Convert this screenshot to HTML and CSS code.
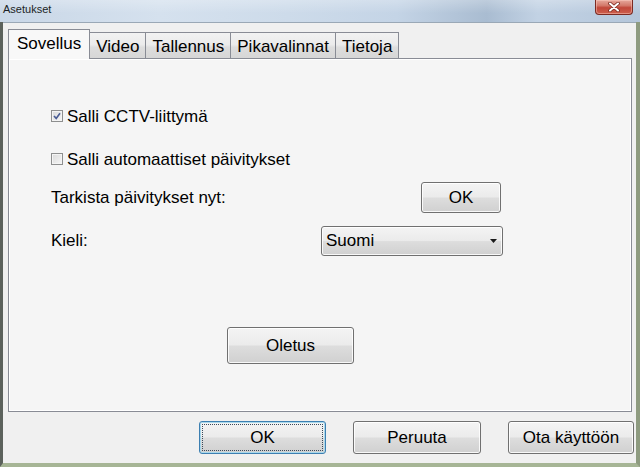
FILE: index.html
```html
<!DOCTYPE html>
<html lang="fi">
<head>
<meta charset="utf-8">
<title>Asetukset</title>
<link rel="stylesheet" href="styles.css">
</head>
<body>
<div class="window">
  <div class="titlebar">
    <span class="title">Asetukset</span>
    <div class="close">
      <svg width="12" height="10" viewBox="0 0 12 10">
        <path d="M2 1.5 L10 8.5 M10 1.5 L2 8.5" stroke="#7a2a20" stroke-width="3.6" stroke-linecap="round" fill="none"/>
        <path d="M2 1.5 L10 8.5 M10 1.5 L2 8.5" stroke="#ffffff" stroke-width="2" stroke-linecap="round" fill="none"/>
      </svg>
    </div>
  </div>
  <div class="frame">
    <div class="client">
      <div class="tabs">
        <div class="tab active">Sovellus</div>
        <div class="tab">Video</div>
        <div class="tab">Tallennus</div>
        <div class="tab">Pikavalinnat</div>
        <div class="tab">Tietoja</div>
      </div>
      <div class="panel">
        <div class="row row-cctv">
          <span class="check">
            <svg width="8" height="8" viewBox="0 0 8 8"><path d="M1 4 L3.2 6.4 L7 1.2" stroke="#4a5c94" stroke-width="1.6" fill="none"/></svg>
          </span>
          <span>Salli CCTV-liittymä</span>
        </div>
        <div class="row row-auto">
          <span class="check"></span>
          <span>Salli automaattiset päivitykset</span>
        </div>
        <div class="row row-update">
          <span class="label label-update">Tarkista päivitykset nyt:</span>
          <button class="btn btn-small">OK</button>
        </div>
        <div class="row row-lang">
          <span class="label label-lang">Kieli:</span>
          <div class="combo">
            <span class="combo-text">Suomi</span>
            <svg class="combo-arrow" width="7" height="4" viewBox="0 0 7 4"><polygon points="0,0 7,0 3.5,4" fill="#1a1a1a"/></svg>
          </div>
        </div>
        <div class="row row-reset">
          <button class="btn btn-reset">Oletus</button>
        </div>
      </div>
      <div class="actions">
        <button class="btn btn-action btn-focus">OK</button>
        <button class="btn btn-action btn-cancel">Peruuta</button>
        <button class="btn btn-action btn-apply">Ota käyttöön</button>
      </div>
    </div>
  </div>
</div>
</body>
</html>
```
FILE: styles.css
```css
* { box-sizing: border-box; }

html, body {
  margin: 0;
  padding: 0;
}

body {
  width: 640px;
  height: 467px;
  overflow: hidden;
  font-family: "Liberation Sans", Arial, sans-serif;
  font-size: 17px;
  color: #000;
  background: #8d9886;
}

.window {
  width: 640px;
  height: 467px;
  display: flex;
  flex-direction: column;
}

.titlebar {
  height: 22px;
  flex: none;
  display: flex;
  justify-content: space-between;
  align-items: flex-start;
  background:
    linear-gradient(to bottom, rgba(255,255,255,0.25), rgba(255,255,255,0) 60%),
    linear-gradient(to right, #c9d7e7 0%, #d5e1ee 25%, #cddbea 45%, #c4d4e6 62%, #a9bcd1 76%, #c2d2e4 84%, #b4c6da 100%);
}

.title {
  padding: 3px 0 0 3px;
  font-size: 11px;
  line-height: 12px;
  color: #1b1f26;
}

.close {
  width: 38px;
  height: 15px;
  margin-right: 7px;
  border: 1px solid #7b2a22;
  border-top: none;
  border-radius: 0 0 4px 4px;
  background: linear-gradient(to bottom, #e6a89c 0%, #d3786a 40%, #c1473a 55%, #cd5f4d 100%);
  box-shadow: inset 0 0 0 1px rgba(255,210,200,0.45);
  display: flex;
  align-items: center;
  justify-content: center;
}

.frame {
  flex: 1;
  display: flex;
  border-left: 3px solid #5c625c;
  border-right: 4px solid #8e9b80;
  border-bottom: 4px solid #a6b595;
}

.client {
  flex: 1;
  display: flex;
  flex-direction: column;
  background: #f0f0f0;
  border-top: 1px solid #9aa8b6;
  padding: 6px 2px 9px 5px;
}

.tabs {
  height: 30px;
  flex: none;
  display: flex;
  align-items: flex-end;
  padding-left: 1px;
}

.tab {
  height: 27px;
  padding: 4px 6px 0;
  line-height: 20px;
  border: 1px solid #898c95;
  border-bottom: none;
  margin-right: -1px;
  background: linear-gradient(to bottom, #f2f2f2 0%, #ebebeb 45%, #dddddd 55%, #d6d6d6 100%);
  white-space: nowrap;
}

.tab.active {
  height: 30px;
  padding: 4px 8px 0;
  margin-left: -1px;
  position: relative;
  z-index: 1;
  background: #f8f8f8;
}

.panel {
  flex: 1;
  margin-top: -1px;
  margin-right: 2px;
  border: 1px solid #898c95;
  background: #f5f5f5;
  box-shadow: inset 0 0 0 1px #ffffff;
  padding: 48px 0 0 42px;
  display: flex;
  flex-direction: column;
}

.row {
  display: flex;
  align-items: center;
}

.row-cctv { height: 20px; }
.row-auto { height: 20px; margin-top: 23px; }
.row-update { height: 31px; margin-top: 12px; }
.row-lang { height: 30px; margin-top: 13px; }
.row-reset { margin-top: 71px; }

.check {
  width: 12px;
  height: 12px;
  margin: -3px 4px 0 0;
  flex: none;
  border: 1px solid #8e8f8f;
  background: linear-gradient(to bottom right, #dadada, #f6f6f6);
  box-shadow: inset 0 0 0 1px #f4f4f4;
  display: flex;
  align-items: center;
  justify-content: center;
}

.label { flex: none; }
.label-update { width: 370px; }
.label-lang { width: 270px; }

.btn {
  font-family: "Liberation Sans", Arial, sans-serif;
  font-size: 17px;
  color: #000;
  border: 1px solid #707070;
  border-radius: 3px;
  background: linear-gradient(to bottom, #f4f4f4 0%, #ebebeb 48%, #dddddd 52%, #d0d0d0 100%);
  box-shadow: inset 0 0 0 1px rgba(255,255,255,0.85);
  padding: 0;
  margin: 0;
  position: relative;
}

.btn-small { width: 80px; height: 31px; }
.btn-reset { width: 127px; height: 37px; margin-left: 176px; }

.combo {
  width: 182px;
  height: 30px;
  border: 1px solid #707070;
  border-radius: 3px;
  background: linear-gradient(to bottom, #f4f4f4 0%, #ebebeb 48%, #dddddd 52%, #d0d0d0 100%);
  box-shadow: inset 0 0 0 1px rgba(255,255,255,0.85);
  display: flex;
  align-items: center;
  justify-content: space-between;
  padding: 0 5px 0 4px;
}

.combo-arrow { flex: none; }

.actions {
  flex: none;
  display: flex;
  justify-content: flex-end;
  gap: 27px;
  margin-top: 9px;
}

.btn-action { height: 33px; width: 127px; }
.btn-cancel { width: 128px; }
.btn-apply { width: 126px; }

.btn-focus {
  border-color: #3c7fb1;
  box-shadow: inset 0 0 0 1px #a8d8ec;
}

.btn-focus::after {
  content: "";
  position: absolute;
  top: 2px;
  left: 2px;
  right: 2px;
  bottom: 2px;
  border: 1px dotted #3a4a5a;
}
```
